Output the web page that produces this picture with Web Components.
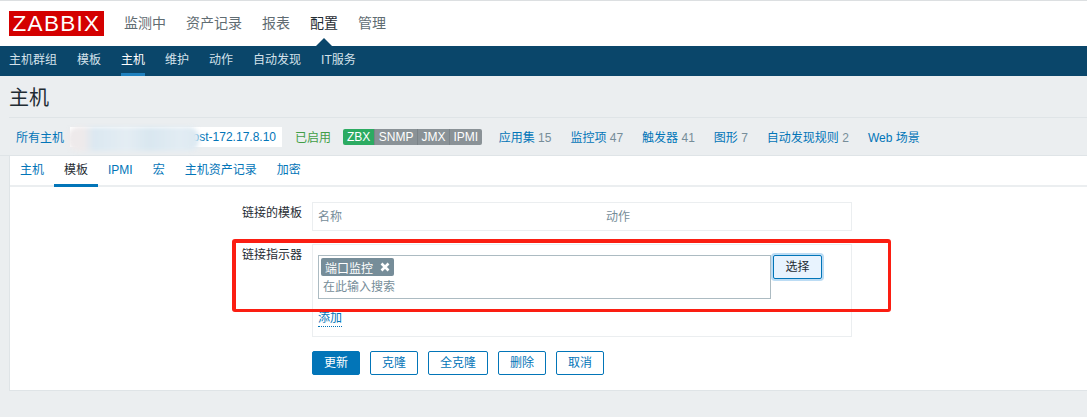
<!DOCTYPE html>
<html>
<head>
<meta charset="utf-8">
<title>主机</title>
<style>
  html, body { margin: 0; padding: 0; height: 100%; background: #ebeef0; overflow: hidden; }
  body { font: 12px "Liberation Sans", "Noto Sans CJK SC", sans-serif; color: #1f2c33; }
</style>
</head>
<body>
<zbx-top></zbx-top>
<zbx-subnav></zbx-subnav>
<zbx-title>主机</zbx-title>
<zbx-crumbs></zbx-crumbs>
<zbx-panel>
  <zbx-tabs></zbx-tabs>
  <zbx-form></zbx-form>
</zbx-panel>
<script>
// small helper, every element is the same: style + markup in an open shadow root
function shadow(el, html) {
  el.attachShadow({mode: "open"}).innerHTML = html;
}

customElements.define('zbx-top', class extends HTMLElement {
  constructor() {
    super();
    let items = ['监测中', '资产记录', '报表', '配置', '管理'];
    shadow(this, `
    <style>
      :host { display: flex; align-items: center; height: 45px; background: #fff; border-top: 1px solid #dcdfe1; padding-left: 9px; position: relative; }
      .logo { width: 95px; height: 25px; background: #d40000; color: #fff; font-size: 22.5px; line-height: 25px; text-align: center; letter-spacing: 1.3px; }
      nav { display: flex; gap: 20px; margin-left: 20px; font-size: 14px; color: #5f6c72; margin-top: -4px; }
      .on { color: #1f2c33; }
      .tip { position: absolute; left: 316px; bottom: 0; width: 0; height: 0; border: 8px solid transparent; border-top: 0; border-bottom-color: #0a466a; }
    </style>
    <div class="logo">ZABBIX</div>
    <nav>${items.map(t => `<span class="${t == '配置' ? 'on' : ''}">${t}</span>`).join('')}</nav>
    <div class="tip"></div>`);
  }
});

customElements.define('zbx-subnav', class extends HTMLElement {
  constructor() {
    super();
    let items = ['主机群组', '模板', '主机', '维护', '动作', '自动发现', 'IT服务'];
    shadow(this, `
    <style>
      :host { display: flex; gap: 20px; height: 30px; background: #0a466a; padding-left: 9px; color: #d4e2ea; }
      span { line-height: 28px; height: 27px; }
      .on { color: #fff; border-bottom: 3px solid #1f81bf; }
    </style>
    ${items.map(t => `<span class="${t == '主机' ? 'on' : ''}">${t}</span>`).join('')}`);
  }
});

customElements.define('zbx-title', class extends HTMLElement {
  constructor() {
    super();
    shadow(this, `
    <style>
      :host { display: block; height: 41px; margin-left: 9px; border-bottom: 1px solid #dfe4e7; font-size: 20px; line-height: 45px; color: #1f2c33; }
    </style>
    <slot></slot>`);
  }
});

customElements.define('zbx-crumbs', class extends HTMLElement {
  constructor() {
    super();
    shadow(this, `
    <style>
      :host { display: flex; align-items: center; height: 37px; padding-left: 16px; position: relative; color: #0275b8; border-bottom: 1px solid #dfe4e7; box-sizing: content-box; }
      .host { position: absolute; left: 70px; top: 9px; width: 212px; height: 20px; background: #fff; line-height: 20px; text-align: right; box-sizing: border-box; padding-right: 6px; }
      .smear { position: absolute; left: 68px; top: 9px; width: 131px; height: 24px; background: linear-gradient(90deg, #eeeaeb 0, #eeeaeb 12%, #dbe8f1 20%, #e4edf3 45%, #d9e7f0 62%, #e2ecf3 85%, #dce9f2 100%); filter: blur(2px); border-radius: 10px; }
      .rest { position: absolute; left: 295px; top: 0; height: 37px; display: flex; align-items: center; }
      .en { color: #429e47; margin-right: 12px; }
      .tags { display: flex; height: 16px; border-radius: 2px; overflow: hidden; margin-right: 17px; line-height: 16px; color: #fff; font-size: 12px; }
      .tags span { background: #8a9297; padding: 0 3.5px; border-left: 1px solid #7b8388; }
      .tags .zbx { background: #2cab62; border-left: 0; padding: 0 4px; }
      .m { margin-right: 19px; white-space: nowrap; }
      .m i { font-style: normal; color: #768d99; }
    </style>
    <span>所有主机</span>
    <div class="host">ost-172.17.8.10</div>
    <div class="smear"></div>
    <div class="rest">
      <span class="en">已启用</span>
      <div class="tags"><span class="zbx">ZBX</span><span>SNMP</span><span>JMX</span><span>IPMI</span></div>
      <span class="m">应用集 <i>15</i></span>
      <span class="m">监控项 <i>47</i></span>
      <span class="m">触发器 <i>41</i></span>
      <span class="m">图形 <i>7</i></span>
      <span class="m">自动发现规则 <i>2</i></span>
      <span class="m">Web 场景</span>
    </div>`);
  }
});

customElements.define('zbx-panel', class extends HTMLElement {
  constructor() {
    super();
    shadow(this, `
    <style>
      :host { display: block; margin-left: 9px; height: 234px; background: #fff; border-bottom: 1px solid #dfe4e7; border-left: 1px solid #dfe4e7; position: relative; }
    </style>
    <slot></slot>`);
  }
});

customElements.define('zbx-tabs', class extends HTMLElement {
  constructor() {
    super();
    let items = ['主机', '模板', 'IPMI', '宏', '主机资产记录', '加密'];
    shadow(this, `
    <style>
      :host { display: flex; height: 31px; box-sizing: border-box; border-bottom: 2px solid #ebeef0; padding-left: 0; color: #0275b8; }
      span { padding: 0 10px; height: 29px; line-height: 28px; box-sizing: border-box; }
      .on { color: #1f2c33; border-bottom: 3px solid #0275b8; height: 31px; }
    </style>
    ${items.map(t => `<span class="${t == '模板' ? 'on' : ''}">${t}</span>`).join('')}`);
  }
});

customElements.define('zbx-form', class extends HTMLElement {
  constructor() {
    super();
    shadow(this, `
    <style>
      :host { display: block; padding-top: 15px; position: relative; }
      .row { display: grid; grid-template-columns: 292px 540px; column-gap: 10px; margin-bottom: 13px; }
      .row > label { text-align: right; line-height: 20px; padding-top: 1px; color: #1f2c33; }
      .row:first-child > label { padding-top: 3px; }
      .box { border: 1px solid #ebeef0; box-sizing: border-box; width: 540px; }
      .head { height: 29px; display: flex; align-items: center; padding: 0 0 2px 5px; color: #768d99; }
      .head span:first-child { width: 288px; }
      .links { height: 93px; padding: 10px 0 0 5px; }
      .pick { display: flex; gap: 2px; align-items: flex-start; }
      .input { width: 453px; height: 44px; box-sizing: border-box; border: 1px solid #acbbc2; padding: 2px 0 0 2px; }
      .tag { display: inline-flex; align-items: center; height: 18px; background: #768d99; color: #fff; border-radius: 2px; padding: 0 4px 0 4px; gap: 7px; vertical-align: top; }
      .tag svg { display: block; }
      .hint { color: #768d99; line-height: 18px; margin: 2px 0 0 2px; }
      .sel { width: 49px; height: 24px; box-sizing: border-box; border: 1px solid #0275b8; border-radius: 2px; background: #e8f3fe; box-shadow: 0 0 0 2px #bcdcf4; color: #1f2c33; text-align: center; line-height: 22px; }
      .add { display: inline-block; margin-top: 12px; line-height: 15px; color: #0275b8; border-bottom: 1px dotted #0275b8; }
      .btns { display: flex; gap: 10px; margin-left: 302px; margin-top: 14px; }
      .btn { height: 24px; box-sizing: border-box; padding: 0 11px; border: 1px solid #0275b8; border-radius: 2px; color: #0275b8; line-height: 22px; }
      .btn.pri { background: #0275b8; color: #fff; }
      .red { position: absolute; left: 222px; top: 52px; width: 659px; height: 73px; box-sizing: border-box; border: solid #fb1e12; border-width: 4px 3px 3px 4px; border-radius: 3px; }
    </style>
    <div class="row">
      <label>链接的模板</label>
      <div class="box head"><span>名称</span><span>动作</span></div>
    </div>
    <div class="row" style="margin-bottom:0">
      <label>链接指示器</label>
      <div class="box links">
        <div class="pick">
          <div class="input">
            <div class="tag">端口监控
              <svg width="10" height="10" viewBox="0 0 10 10"><path d="M1.5 1.5 8.5 8.5M8.5 1.5 1.5 8.5" stroke="#fff" stroke-width="2.6"/></svg>
            </div>
            <div class="hint">在此输入搜索</div>
          </div>
          <div class="sel">选择</div>
        </div>
        <span class="add">添加</span>
      </div>
    </div>
    <div class="btns">
      <div class="btn pri">更新</div>
      <div class="btn">克隆</div>
      <div class="btn">全克隆</div>
      <div class="btn">删除</div>
      <div class="btn">取消</div>
    </div>
    <div class="red"></div>`);
  }
});
</script>
</body>
</html>
